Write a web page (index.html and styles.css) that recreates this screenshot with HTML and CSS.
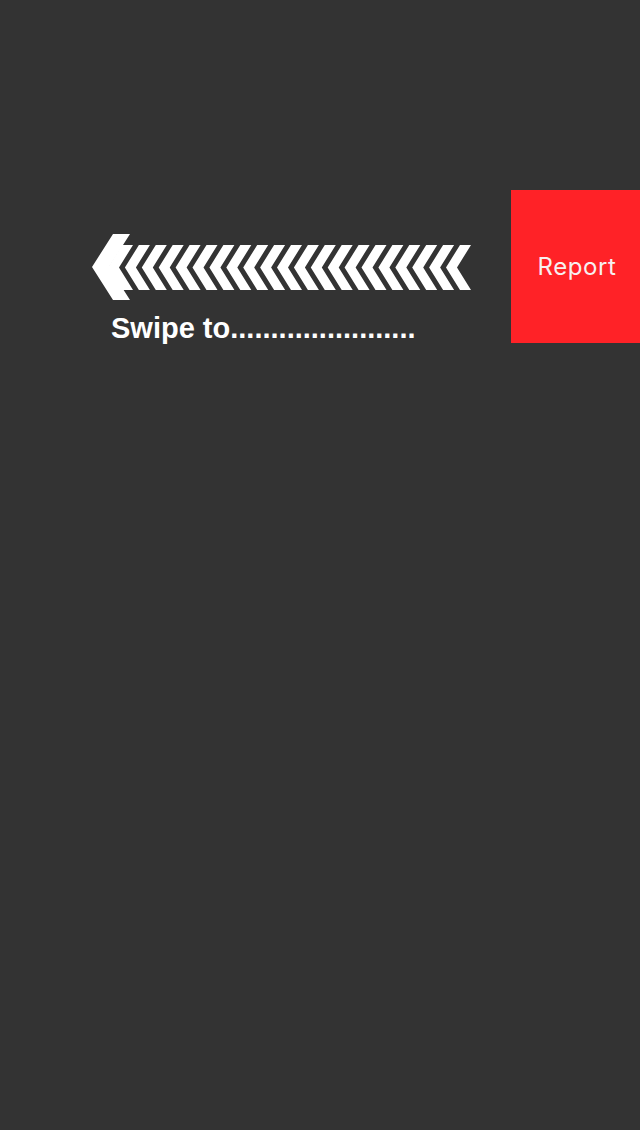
FILE: index.html
```html
<!DOCTYPE html>
<html>
<head>
<meta charset="utf-8">
<link rel="stylesheet" href="styles.css">
</head>
<body>
<div class="screen">
  <div class="swipe">
    <svg class="arrow" width="380" height="66" viewBox="92 234 380 66">
      <polygon points="92,267 113,234 130,234 109,267 130,300 113,300" fill="#fff"/>
      <polygon points="108,267.5 122,245 133,245 119,267.5 133,290 122,290" fill="#fff"/>
      <polygon points="124.9,267.5 138.9,245 149.9,245 135.9,267.5 149.9,290 138.9,290" fill="#fff"/>
      <polygon points="141.8,267.5 155.8,245 166.8,245 152.8,267.5 166.8,290 155.8,290" fill="#fff"/>
      <polygon points="158.7,267.5 172.7,245 183.7,245 169.7,267.5 183.7,290 172.7,290" fill="#fff"/>
      <polygon points="175.6,267.5 189.6,245 200.6,245 186.6,267.5 200.6,290 189.6,290" fill="#fff"/>
      <polygon points="192.5,267.5 206.5,245 217.5,245 203.5,267.5 217.5,290 206.5,290" fill="#fff"/>
      <polygon points="209.4,267.5 223.4,245 234.4,245 220.4,267.5 234.4,290 223.4,290" fill="#fff"/>
      <polygon points="226.3,267.5 240.3,245 251.3,245 237.3,267.5 251.3,290 240.3,290" fill="#fff"/>
      <polygon points="243.2,267.5 257.2,245 268.2,245 254.2,267.5 268.2,290 257.2,290" fill="#fff"/>
      <polygon points="260.1,267.5 274.1,245 285.1,245 271.1,267.5 285.1,290 274.1,290" fill="#fff"/>
      <polygon points="277,267.5 291,245 302,245 288,267.5 302,290 291,290" fill="#fff"/>
      <polygon points="293.9,267.5 307.9,245 318.9,245 304.9,267.5 318.9,290 307.9,290" fill="#fff"/>
      <polygon points="310.8,267.5 324.8,245 335.8,245 321.8,267.5 335.8,290 324.8,290" fill="#fff"/>
      <polygon points="327.7,267.5 341.7,245 352.7,245 338.7,267.5 352.7,290 341.7,290" fill="#fff"/>
      <polygon points="344.6,267.5 358.6,245 369.6,245 355.6,267.5 369.6,290 358.6,290" fill="#fff"/>
      <polygon points="361.5,267.5 375.5,245 386.5,245 372.5,267.5 386.5,290 375.5,290" fill="#fff"/>
      <polygon points="378.4,267.5 392.4,245 403.4,245 389.4,267.5 403.4,290 392.4,290" fill="#fff"/>
      <polygon points="395.3,267.5 409.3,245 420.3,245 406.3,267.5 420.3,290 409.3,290" fill="#fff"/>
      <polygon points="412.2,267.5 426.2,245 437.2,245 423.2,267.5 437.2,290 426.2,290" fill="#fff"/>
      <polygon points="429.1,267.5 443.1,245 454.1,245 440.1,267.5 454.1,290 443.1,290" fill="#fff"/>
      <polygon points="446,267.5 460,245 471,245 457,267.5 471,290 460,290" fill="#fff"/>
    </svg>
    <div class="label">Swipe to.......................</div>
  </div>
  <div class="report">Report</div>
</div>
</body>
</html>
```

FILE: styles.css
```css
html, body {
  margin: 0;
  padding: 0;
  background: #333333;
}
.screen {
  width: 640px;
  height: 1130px;
  display: flex;
  align-items: flex-start;
  padding-top: 190px;
  box-sizing: border-box;
}
.swipe {
  margin-left: 92px;
  margin-top: 44px;
  display: flex;
  flex-direction: column;
}
.arrow {
  display: block;
}
.label {
  margin-top: 12px;
  margin-left: 19px;
  font-family: "Liberation Sans", Arial, sans-serif;
  font-weight: bold;
  font-size: 29px;
  line-height: 33px;
  color: #ffffff;
  white-space: nowrap;
}
.report {
  margin-left: auto;
  width: 129px;
  height: 153px;
  padding-left: 3px;
  box-sizing: border-box;
  background: #ff2227;
  color: #f7f0f0;
  font-family: "Inter", sans-serif;
  font-size: 24px;
  letter-spacing: 0.6px;
  display: flex;
  align-items: center;
  justify-content: center;
}
```
